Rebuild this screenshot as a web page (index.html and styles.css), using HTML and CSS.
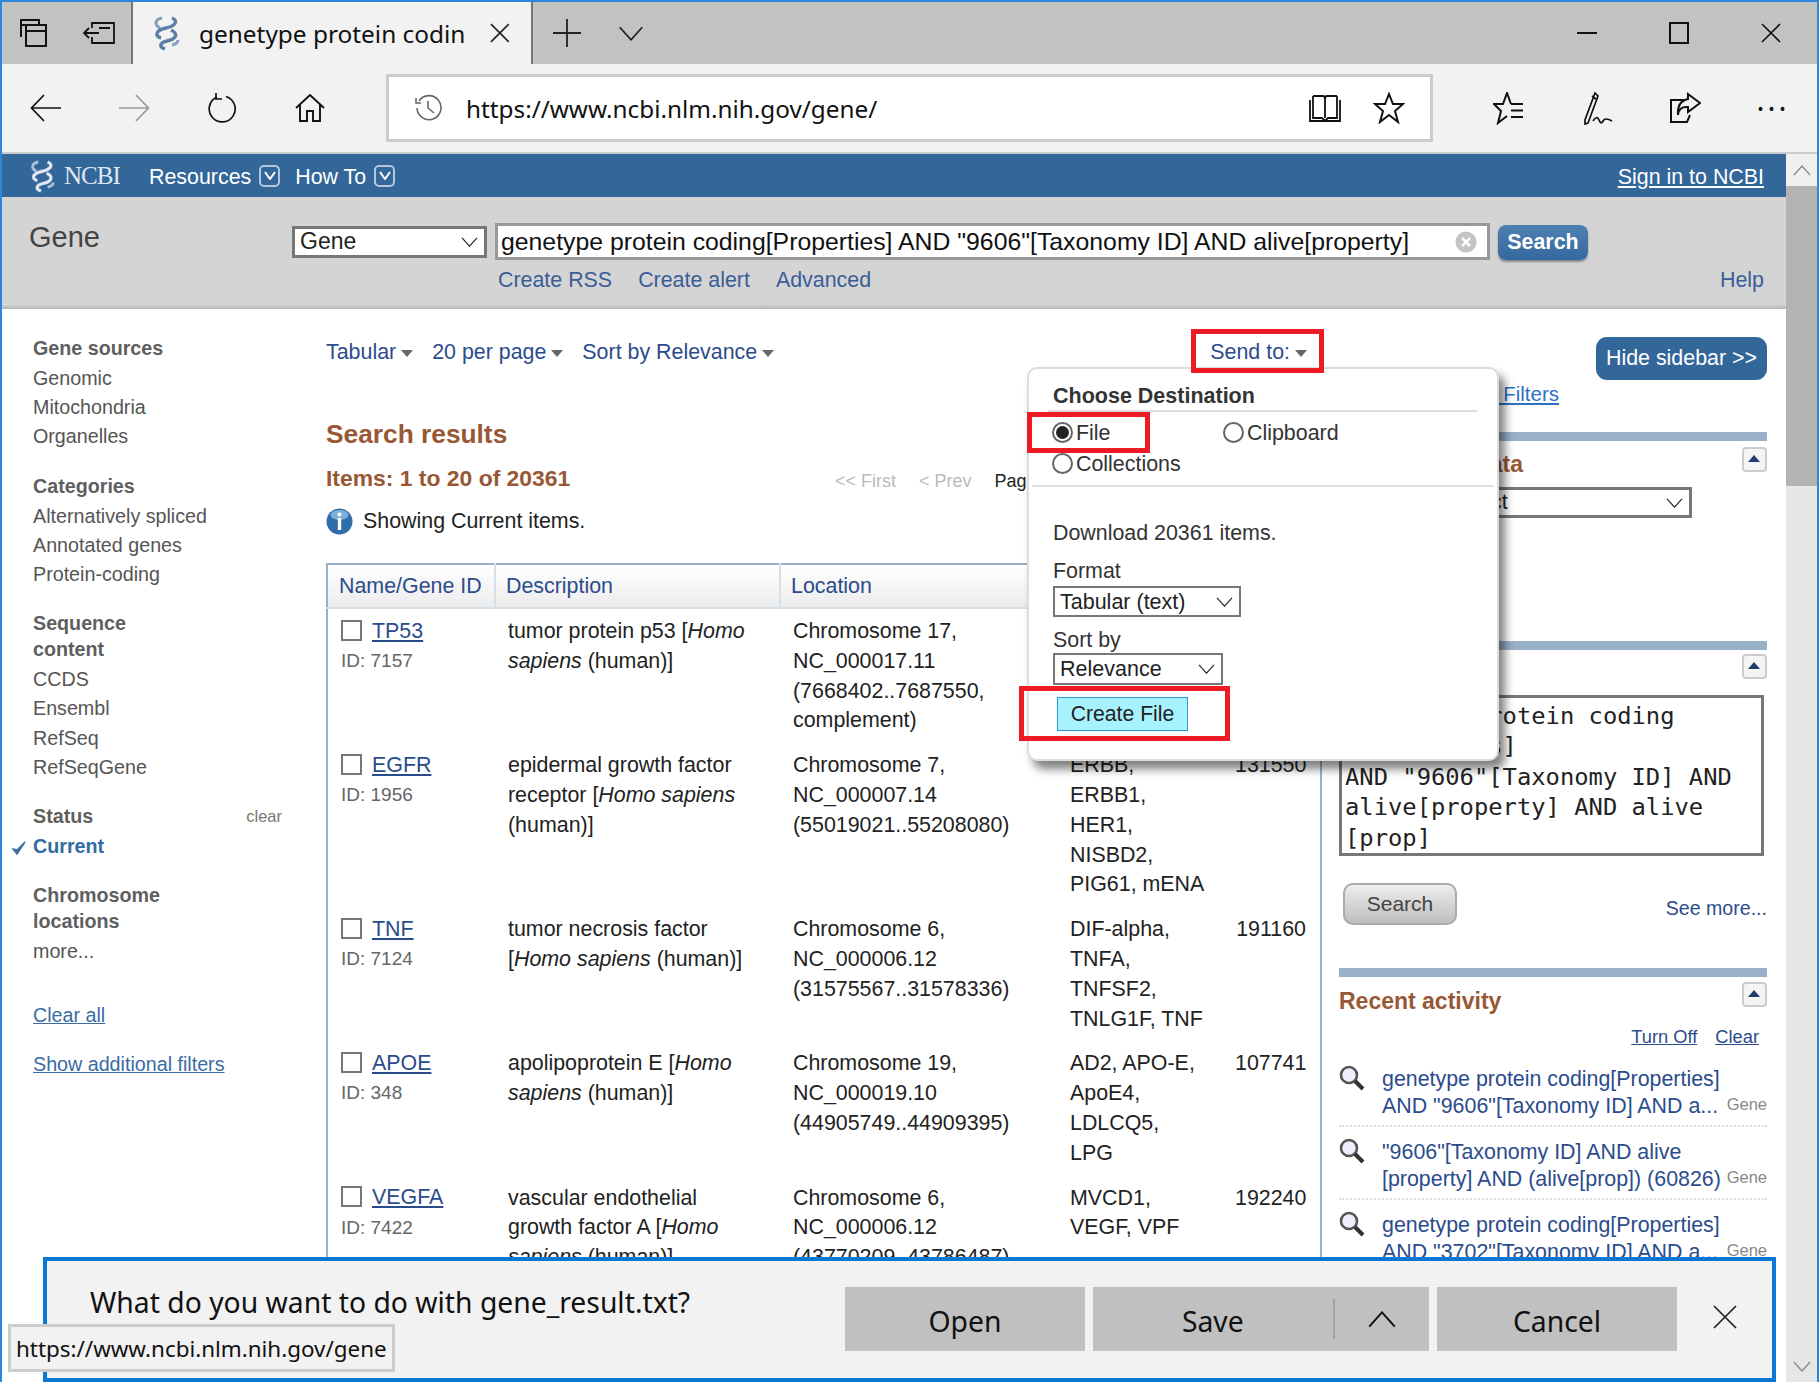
FILE: index.html
```html
<!DOCTYPE html>
<html lang="en">
<head>
    <meta charset="UTF-8">
    <title>genetype protein coding - Gene - NCBI</title>
    <link rel="stylesheet" href="styles.css">
</head>
<body>
<svg class="defs" width="0" height="0">
    <symbol id="helix" viewBox="0 0 30 36">
        <path d="M21 3C28 6 24 11 15 13C5 15 3 21 10 23" fill="none" stroke="currentColor" stroke-width="3.4"/>
        <path d="M9 13C2 9 5 4 11 3" fill="none" stroke="currentColor" stroke-width="3" opacity=".7"/>
        <path d="M20 15C28 19 25 24 16 26C8 28 8 32 14 34" fill="none" stroke="currentColor" stroke-width="3.4"/>
        <path d="M21 30C25 29 27 27 27 25" fill="none" stroke="currentColor" stroke-width="3" opacity=".7"/>
    </symbol>
    <symbol id="chev" viewBox="0 0 20 12">
        <path d="M1 1L10 11L19 1" fill="none" stroke="currentColor" stroke-width="1.4"/>
    </symbol>
    <symbol id="mark-chev" viewBox="0 0 12 9">
        <path d="M1 1L6 8L11 1" fill="none" stroke="currentColor" stroke-width="2"/>
    </symbol>
    <symbol id="glass" viewBox="0 0 26 26">
        <circle cx="10" cy="10" r="8" fill="#eef" stroke="#555" stroke-width="2.6"/>
        <path d="M16 16L24 24" stroke="#333" stroke-width="4"/>
    </symbol>
</svg>

<div class="window">
    <!-- Barra de abas -->
    <div class="tabbar">
        <div class="tab-tool">
            <svg width="28" height="28" viewBox="0 0 28 28" fill="none" stroke="#111" stroke-width="2"><path d="M1 18V1H19V6M1 6H19M6 6H26V27H6ZM6 12H26"/></svg>
        </div>
        <div class="tab-tool">
            <svg width="32" height="22" viewBox="0 0 32 22" fill="none" stroke="#111" stroke-width="1.8"><path d="M9 6V1H31V21H9V15M1 11H16M6 6L1 11L6 16M16 6H27"/></svg>
        </div>
        <div class="tab">
            <svg class="tab-icon" width="32" height="36"><use href="#helix"/></svg>
            <span class="tab-title">genetype protein coding[Properties]</span>
            <svg width="20" height="20" viewBox="0 0 20 20" stroke="#222" stroke-width="1.6"><path d="M1 1L19 19M19 1L1 19"/></svg>
        </div>
        <div class="tab-new">
            <svg width="28" height="28" viewBox="0 0 28 28" stroke="#222" stroke-width="1.8"><path d="M14 0V28M0 14H28"/></svg>
        </div>
        <div class="tab-more">
            <svg width="26" height="15"><use href="#chev"/></svg>
        </div>
        <div class="win-btn win-first">
            <svg width="20" height="3"><rect width="20" height="2" fill="#111"/></svg>
        </div>
        <div class="win-btn">
            <svg width="20" height="22" viewBox="0 0 20 22" fill="none" stroke="#111" stroke-width="2"><rect x="1" y="1" width="18" height="20"/></svg>
        </div>
        <div class="win-btn">
            <svg width="20" height="20" viewBox="0 0 20 20" stroke="#111" stroke-width="1.6"><path d="M1 1L19 19M19 1L1 19"/></svg>
        </div>
    </div>

    <!-- Barra de endereco -->
    <div class="toolbar">
        <div class="nav-btn">
            <svg width="32" height="28" viewBox="0 0 32 28" fill="none" stroke="#111" stroke-width="1.7"><path d="M31 14H2M14 1L1.500 14L14 27"/></svg>
        </div>
        <div class="nav-btn">
            <svg width="32" height="28" viewBox="0 0 32 28" fill="none" stroke="#999" stroke-width="1.7"><path d="M1 14H30M18 1L30.500 14L18 27"/></svg>
        </div>
        <div class="nav-btn">
            <svg width="30" height="30" viewBox="0 0 30 30" fill="none" stroke="#111" stroke-width="1.7"><path d="M10 4A13 13 0 1 0 19 3.500M9 0V6H15"/></svg>
        </div>
        <div class="nav-btn">
            <svg width="30" height="28" viewBox="0 0 30 28" fill="none" stroke="#111" stroke-width="1.9"><path d="M1 14L15 1L29 14M5 11V27H12V17H18V27H25V11"/></svg>
        </div>
        <div class="address">
            <svg class="hist" width="28" height="28" viewBox="0 0 28 28" fill="none" stroke="#666" stroke-width="1.6"><path d="M5 7A12 12 0 1 1 3 14M2 4V9H7M14 7V14L20 19"/></svg>
            <span class="url">https://www.ncbi.nlm.nih.gov/gene/</span>
            <svg width="32" height="30" viewBox="0 0 32 30" fill="none" stroke="#111" stroke-width="1.8"><path d="M4 3H14Q16 3 16 6V25M28 3H18Q16 3 16 6M4 3V25H13L16 28L19 25H28V3M1 7V28H31V7"/></svg>
            <svg class="star" width="32" height="32" viewBox="0 0 32 32" fill="none" stroke="#111" stroke-width="2"><path d="M16 2L20 12H30L22 19L25 30L16 23L7 30L10 19L2 12H12Z"/></svg>
        </div>
        <div class="nav-btn nav-right">
            <svg width="32" height="33" viewBox="0 0 32 33" fill="none" stroke="#111" stroke-width="2"><path d="M18 12L14 1L10 12H1L8 19L5 31L14 24M18 12H30M18 18.500H30M18 25H30"/></svg>
        </div>
        <div class="nav-btn">
            <svg width="32" height="34" viewBox="0 0 32 34" fill="none" stroke="#111" stroke-width="1.7"><path d="M14 2L17 5L7 32L4 33L4 29ZM11 5L15 8M12 30Q16 24 18 29T22 30T31 30"/></svg>
        </div>
        <div class="nav-btn">
            <svg width="32" height="32" viewBox="0 0 32 32" fill="none" stroke="#111" stroke-width="2"><path d="M17 8H2V30H18L21 23M19 2L31 11L19 20V15Q10 14 9 23Q8 9 19 7Z"/></svg>
        </div>
        <div class="nav-btn nav-dots">&middot;&middot;&middot;</div>
    </div>

    <div class="viewport">
        <div class="page">
            <div class="ncbi-bar">
                <svg class="ncbi-logo" width="28" height="34"><use href="#helix"/></svg>
                <span class="ncbi-name">NCBI</span>
                <a class="ncbi-menu">Resources</a>
                <span class="menu-mark"><svg width="12" height="9"><use href="#mark-chev"/></svg></span>
                <a class="ncbi-menu">How To</a>
                <span class="menu-mark"><svg width="12" height="9"><use href="#mark-chev"/></svg></span>
                <a class="sign-in">Sign in to NCBI</a>
            </div>

            <div class="search-bar">
                <div class="db-title">Gene</div>
                <div class="search-main">
                    <div class="search-row">
                        <div class="select db-select">Gene<svg width="17" height="10"><use href="#chev"/></svg></div>
                        <div class="term-box">
                            <span>genetype protein coding[Properties] AND "9606"[Taxonomy ID] AND alive[property]</span>
                            <svg width="22" height="22" viewBox="0 0 22 22"><circle cx="11" cy="11" r="10.500" fill="#c4c4c4"/><path d="M7 7L15 15M15 7L7 15" stroke="#fff" stroke-width="2.500"/></svg>
                        </div>
                        <button class="search-btn">Search</button>
                    </div>
                    <div class="search-links">
                        <a>Create RSS</a>
                        <a>Create alert</a>
                        <a>Advanced</a>
                        <a class="help">Help</a>
                    </div>
                </div>
            </div>

            <div class="content">
                <!-- Filtros -->
                <div class="filters">
                    <div class="filter-group">
                        <h4>Gene sources</h4>
                        <a>Genomic</a>
                        <a>Mitochondria</a>
                        <a>Organelles</a>
                    </div>
                    <div class="filter-group">
                        <h4>Categories</h4>
                        <a>Alternatively spliced</a>
                        <a>Annotated genes</a>
                        <a>Protein-coding</a>
                    </div>
                    <div class="filter-group">
                        <h4>Sequence<br>content</h4>
                        <a>CCDS</a>
                        <a>Ensembl</a>
                        <a>RefSeq</a>
                        <a>RefSeqGene</a>
                    </div>
                    <div class="filter-group">
                        <h4 class="status-head">Status <span class="clear">clear</span></h4>
                        <a class="current">
                            <svg class="check" width="14" height="14" viewBox="0 0 14 14"><path d="M1 8L5 13L13 1L5 9Z" fill="#3f6fa5" stroke="#3f6fa5" stroke-width="1.500"/></svg>
                            Current
                        </a>
                    </div>
                    <div class="filter-group">
                        <h4>Chromosome<br>locations</h4>
                        <a>more...</a>
                    </div>
                    <a class="filter-link first-link">Clear all</a>
                    <a class="filter-link">Show additional filters</a>
                </div>

                <!-- Resultados -->
                <div class="results">
                    <div class="display-row">
                        <a class="display-item">Tabular<i class="caret"></i></a>
                        <a class="display-item">20 per page<i class="caret"></i></a>
                        <a class="display-item">Sort by Relevance<i class="caret"></i></a>
                        <a class="send-to">Send to:<i class="caret"></i></a>
                    </div>
                    <h2 class="results-title">Search results</h2>
                    <div class="items-row">
                        <h3>Items: 1 to 20 of 20361</h3>
                        <div class="pager">
                            <span>&lt;&lt; First</span>
                            <span>&lt; Prev</span>
                            <b>Page</b>
                        </div>
                    </div>
                    <div class="notice">
                        <svg width="27" height="27" viewBox="0 0 27 27"><circle cx="13.500" cy="13.500" r="13" fill="#2d6da8"/><ellipse cx="13.500" cy="7" rx="9" ry="5" fill="#7fb0d8"/><circle cx="13.500" cy="6.500" r="2" fill="#fff"/><rect x="11.800" y="10" width="3.400" height="12" fill="#fff"/></svg>
                        <span>Showing Current items.</span>
                    </div>
                    <table class="gene-table">
                        <colgroup>
                            <col class="col-name"><col class="col-desc"><col class="col-loc"><col class="col-alias"><col class="col-mim">
                        </colgroup>
                        <thead>
                            <tr>
                                <th>Name/Gene ID</th>
                                <th>Description</th>
                                <th>Location</th>
                                <th></th>
                                <th></th>
                            </tr>
                        </thead>
                        <tbody>
                            <tr>
                                <td><span class="gene-line"><i class="box"></i><a>TP53</a></span><span class="gene-id">ID: 7157</span></td>
                                <td>tumor protein p53 [<em>Homo</em><br><em>sapiens</em> (human)]</td>
                                <td>Chromosome 17,<br>NC_000017.11<br>(7668402..7687550,<br>complement)</td>
                                <td></td>
                                <td class="mim"></td>
                            </tr>
                            <tr>
                                <td><span class="gene-line"><i class="box"></i><a>EGFR</a></span><span class="gene-id">ID: 1956</span></td>
                                <td>epidermal growth factor<br>receptor [<em>Homo sapiens</em><br>(human)]</td>
                                <td>Chromosome 7,<br>NC_000007.14<br>(55019021..55208080)</td>
                                <td>ERBB,<br>ERBB1,<br>HER1,<br>NISBD2,<br>PIG61, mENA</td>
                                <td class="mim">131550</td>
                            </tr>
                            <tr>
                                <td><span class="gene-line"><i class="box"></i><a>TNF</a></span><span class="gene-id">ID: 7124</span></td>
                                <td>tumor necrosis factor<br>[<em>Homo sapiens</em> (human)]</td>
                                <td>Chromosome 6,<br>NC_000006.12<br>(31575567..31578336)</td>
                                <td>DIF-alpha,<br>TNFA,<br>TNFSF2,<br>TNLG1F, TNF</td>
                                <td class="mim">191160</td>
                            </tr>
                            <tr>
                                <td><span class="gene-line"><i class="box"></i><a>APOE</a></span><span class="gene-id">ID: 348</span></td>
                                <td>apolipoprotein E [<em>Homo</em><br><em>sapiens</em> (human)]</td>
                                <td>Chromosome 19,<br>NC_000019.10<br>(44905749..44909395)</td>
                                <td>AD2, APO-E,<br>ApoE4,<br>LDLCQ5,<br>LPG</td>
                                <td class="mim">107741</td>
                            </tr>
                            <tr>
                                <td><span class="gene-line"><i class="box"></i><a>VEGFA</a></span><span class="gene-id">ID: 7422</span></td>
                                <td>vascular endothelial<br>growth factor A [<em>Homo</em><br><em>sapiens</em> (human)]</td>
                                <td>Chromosome 6,<br>NC_000006.12<br>(43770209..43786487)</td>
                                <td>MVCD1,<br>VEGF, VPF</td>
                                <td class="mim">192240</td>
                            </tr>
                        </tbody>
                    </table>
                </div>

                <!-- Coluna direita -->
                <div class="side">
                    <a class="hide-sidebar">Hide sidebar &gt;&gt;</a>
                    <div class="manage-filters"><a>Manage Filters</a></div>

                    <div class="side-box box-related">
                        <div class="side-head"><h3>Find related data</h3><span class="toggle"></span></div>
                        <div class="db-row">
                            <span>Database:</span>
                            <div class="select related-select">Select<svg width="17" height="10"><use href="#chev"/></svg></div>
                        </div>
                    </div>

                    <div class="side-box box-details">
                        <div class="side-head"><h3>Search details</h3><span class="toggle"></span></div>
                        <div class="details-box">genetype protein coding<br>[Properties]<br>AND "9606"[Taxonomy ID] AND<br>alive[property] AND alive<br>[prop]</div>
                        <div class="details-actions">
                            <button class="plain-btn">Search</button>
                            <a>See more...</a>
                        </div>
                    </div>

                    <div class="side-box box-recent">
                        <div class="side-head"><h3>Recent activity</h3><span class="toggle"></span></div>
                        <div class="recent-links"><a>Turn Off</a><a>Clear</a></div>
                        <div class="recent-item">
                            <svg width="26" height="26"><use href="#glass"/></svg>
                            <a>genetype protein coding[Properties]<br>AND "9606"[Taxonomy ID] AND a...</a>
                            <span>Gene</span>
                        </div>
                        <div class="recent-item">
                            <svg width="26" height="26"><use href="#glass"/></svg>
                            <a>"9606"[Taxonomy ID] AND alive<br>[property] AND (alive[prop]) (60826)</a>
                            <span>Gene</span>
                        </div>
                        <div class="recent-item">
                            <svg width="26" height="26"><use href="#glass"/></svg>
                            <a>genetype protein coding[Properties]<br>AND "3702"[Taxonomy ID] AND a...</a>
                            <span>Gene</span>
                        </div>
                    </div>
                </div>
            </div>
        </div>

        <div class="scrollbar">
            <div class="scroll-up"><svg width="18" height="11"><use href="#chev"/></svg></div>
            <div class="scroll-thumb"></div>
            <div class="scroll-track"></div>
            <div class="scroll-down"><svg width="18" height="11"><use href="#chev"/></svg></div>
        </div>
    </div>

    <!-- Menu Send to -->
    <div class="send-menu">
        <h4>Choose Destination</h4>
        <div class="radio-grid">
            <label class="radio"><i class="dot on"></i>File</label>
            <label class="radio"><i class="dot"></i>Clipboard</label>
            <label class="radio"><i class="dot"></i>Collections</label>
        </div>
        <div class="menu-line"></div>
        <p class="menu-download">Download 20361 items.</p>
        <p class="menu-label">Format</p>
        <div class="select format-select">Tabular (text)<svg width="17" height="10"><use href="#chev"/></svg></div>
        <p class="menu-label sort-label">Sort by</p>
        <div class="select sort-select">Relevance<svg width="17" height="10"><use href="#chev"/></svg></div>
        <button class="create-file">Create File</button>
    </div>

    <!-- Marcacoes vermelhas -->
    <div class="mark mark-send"></div>
    <div class="mark mark-file"></div>
    <div class="mark mark-create"></div>

    <!-- Barra de download -->
    <div class="download-bar">
        <span class="download-text">What do you want to do with gene_result.txt?</span>
        <div class="download-btns">
            <div class="dl-btn dl-open">Open</div>
            <div class="dl-btn dl-save">
                <span class="save-label">Save</span>
                <span class="save-arrow"><svg width="30" height="17" viewBox="0 0 20 12" class="flip"><use href="#chev"/></svg></span>
            </div>
            <div class="dl-btn dl-open">Cancel</div>
        </div>
        <svg class="dl-close" width="24" height="24" viewBox="0 0 24 24" stroke="#222" stroke-width="1.700"><path d="M1 1L23 23M23 1L1 23"/></svg>
    </div>

    <div class="status-tip">https://www.ncbi.nlm.nih.gov/gene</div>
</div>
</body>
</html>
```

FILE: styles.css
```css
/* Estilo basico */
body {
    margin: 0;
    font-family: "Liberation Sans", Arial, sans-serif;
    font-size: 21.4px;
    color: #222;
    background: #fff;
}

.defs {
    position: absolute;
}

.window {
    position: relative;
    box-sizing: border-box;
    width: 1819px;
    height: 1382px;
    overflow: hidden;
    display: flex;
    flex-direction: column;
    border: 2px solid #2b88d8;
    border-bottom: none;
}

a {
    color: #2b4c8c;
}

p, h2, h3, h4 {
    margin: 0;
}

/* Abas */
.tabbar {
    display: flex;
    flex: none;
    height: 62px;
    background: #c2c2c2;
    font-family: "Noto Sans", sans-serif;
}

.tab-tool {
    width: 64.5px;
    display: flex;
    align-items: center;
    justify-content: center;
}

.tab {
    display: flex;
    align-items: center;
    box-sizing: border-box;
    width: 402px;
    padding: 0 21px 0 17px;
    background: #f2f2f2;
    border-left: 2px solid #777;
    border-right: 2px solid #777;
}

.tab-icon {
    color: #5b7ea6;
    flex: none;
}

.tab-title {
    width: 270px;
    margin-left: 17px;
    margin-right: 25px;
    font-size: 24.4px;
    white-space: nowrap;
    overflow: hidden;
    color: #111;
}

.tab-new, .tab-more {
    display: flex;
    align-items: center;
    justify-content: center;
    width: 68px;
}

.tab-more {
    width: 60px;
    color: #222;
}

.win-btn {
    width: 92px;
    display: flex;
    align-items: center;
    justify-content: center;
}

.win-first {
    margin-left: auto;
}

/* Barra de endereco */
.toolbar {
    display: flex;
    flex: none;
    align-items: center;
    height: 88px;
    background: #f2f2f2;
    border-bottom: 2px solid #ccc;
    font-family: "Noto Sans", sans-serif;
}

.nav-btn {
    width: 88px;
    height: 60px;
    display: flex;
    align-items: center;
    justify-content: center;
    flex: none;
}

.nav-dots {
    font-size: 30px;
    letter-spacing: 3px;
    color: #111;
}

.nav-right {
    margin-left: 32px;
}

.address {
    display: flex;
    flex: none;
    align-items: center;
    box-sizing: border-box;
    width: 1047px;
    height: 68px;
    margin-left: 32px;
    padding: 0 25px 0 25px;
    background: #fff;
    border: 3px solid #ccc;
}

.url {
    flex: 1;
    margin-left: 24px;
    font-size: 24.3px;
    color: #111;
}

.star {
    margin-left: 32px;
}

.viewport {
    flex: 1;
    display: flex;
    min-height: 0;
}

.page {
    flex: 1;
    min-width: 0;
    overflow: hidden;
}

/* Cabecalho NCBI */
.ncbi-bar {
    display: flex;
    align-items: center;
    height: 43px;
    padding: 0 22px 0 26px;
    background: #336699;
    color: #fff;
}

.ncbi-bar a {
    color: #fff;
}

.ncbi-logo {
    color: #dfe7f0;
}

.ncbi-name {
    width: 85px;
    margin-left: 8px;
    font-family: "Liberation Serif", serif;
    font-size: 25px;
    color: #dfe7f0;
    letter-spacing: -1px;
}

.ncbi-menu {
    margin-top: 4px;
    font-size: 21.4px;
}

.menu-mark {
    display: flex;
    align-items: center;
    justify-content: center;
    box-sizing: border-box;
    width: 21px;
    height: 22px;
    margin: 0 15px 0 8px;
    border: 2px solid #b4c8dc;
    border-radius: 5px;
    color: #fff;
}

.sign-in {
    margin-left: auto;
    margin-top: 4px;
    font-size: 21.4px;
    text-decoration: underline;
}

/* Busca */
.search-bar {
    display: flex;
    box-sizing: border-box;
    height: 112px;
    padding: 0 22px 0 27px;
    background: linear-gradient(#d4d4d4 96%, #b4b4b4);
}

.db-title {
    width: 263px;
    padding-top: 24px;
    font-size: 29px;
    color: #444;
}

.search-main {
    flex: 1;
}

.search-row {
    display: flex;
    align-items: center;
    margin-top: 26px;
}

.select {
    display: flex;
    align-items: center;
    justify-content: space-between;
    box-sizing: border-box;
    background: #fff;
    border: 2px solid #777;
    color: #222;
    font-size: 21.5px;
    padding: 0 6px 0 5px;
}

.db-select {
    width: 195px;
    height: 32px;
    border-width: 3px;
    font-size: 23px;
}

.term-box {
    display: flex;
    align-items: center;
    justify-content: space-between;
    box-sizing: border-box;
    width: 995px;
    height: 37px;
    margin-left: 8px;
    padding: 0 10px 0 3px;
    background: #fff;
    border: 3px solid #999;
    font-size: 24.8px;
    color: #111;
    white-space: nowrap;
}

.search-btn {
    width: 90px;
    height: 35px;
    margin: 2px 0 0 8px;
    padding: 0;
    background: linear-gradient(#4e80b4, #35689c);
    border: none;
    border-radius: 8px;
    box-shadow: 0 2px 2px #888;
    color: #fff;
    font-family: inherit;
    font-size: 21.4px;
    font-weight: bold;
}

.search-links {
    display: flex;
    gap: 26px;
    margin: 7px 0 0 206px;
    font-size: 21.4px;
    line-height: 26px;
}

.search-links a {
    color: #3a5d98;
}

.search-links .help {
    margin-left: auto;
}

/* Colunas */
.content {
    display: flex;
}

/* Filtros */
.filters {
    box-sizing: border-box;
    width: 324px;
    flex: none;
    padding: 26px 0 0 31px;
    font-size: 19.7px;
    line-height: 29.2px;
    color: #555;
}

.filter-group {
    margin-bottom: 21px;
}

.filter-group h4 {
    margin-bottom: 3px;
    font-size: 19.7px;
    line-height: 26px;
    color: #5f5f5f;
}

.filter-group a {
    display: block;
    color: #555;
}

.status-head {
    display: flex;
    justify-content: space-between;
    width: 249px;
}

.clear {
    font-size: 16.5px;
    font-weight: normal;
    color: #777;
}

.filter-group .current {
    position: relative;
    color: #336ba3;
    font-weight: bold;
}

.check {
    position: absolute;
    left: -21px;
    top: 9px;
}

.filter-link {
    display: block;
    margin-bottom: 19px;
    color: #3a6ba3;
    text-decoration: underline;
}

.first-link {
    margin-top: 35px;
}

/* Resultados */
.results {
    box-sizing: border-box;
    width: 996px;
    flex: none;
    padding-top: 28px;
}

.display-row {
    display: flex;
    align-items: center;
    height: 30px;
    font-size: 21.4px;
}

.display-row a {
    color: #2b4c8c;
}

.display-item {
    margin-right: 19px;
}

.send-to {
    margin-left: auto;
    margin-right: 15px;
}

.caret {
    display: inline-block;
    margin-left: 5px;
    vertical-align: 2px;
    border-left: 6px solid transparent;
    border-right: 6px solid transparent;
    border-top: 7px solid #666;
}

.results-title {
    margin-top: 49px;
    font-size: 26.3px;
    line-height: 36px;
    color: #985735;
}

.items-row {
    display: flex;
    align-items: center;
    margin-top: 6px;
    height: 40px;
    white-space: nowrap;
}

.items-row h3 {
    width: 509px;
    font-size: 22.9px;
    color: #985735;
}

.pager {
    display: flex;
    gap: 23px;
    margin-top: 7px;
    font-size: 18px;
    color: #bbb;
}

.pager b {
    font-weight: normal;
    color: #222;
}

.notice {
    display: flex;
    align-items: center;
    gap: 10px;
    margin-top: 7px;
    height: 33px;
    font-size: 21.4px;
    color: #222;
}

.gene-table {
    width: 996px;
    margin-top: 25px;
    table-layout: fixed;
    border-collapse: collapse;
    border-top: 2px solid #99b0c9;
    border-left: 2px solid #99b0c9;
    border-right: 2px solid #99b0c9;
    font-size: 21.4px;
    line-height: 29.8px;
}

.col-name { width: 168px; }
.col-desc { width: 285px; }
.col-loc { width: 277px; }
.col-alias { width: 165px; }

.gene-table th {
    height: 40px;
    padding: 2px 0 0 10px;
    text-align: left;
    font-weight: normal;
    color: #2b4c8c;
    background: linear-gradient(#fff, #ececec);
    border-bottom: 2px solid #d5dfe9;
    border-right: 2px solid #d5dfe9;
}

.gene-table th:first-child {
    padding-left: 11px;
}

.gene-table td {
    padding: 8px 0 7px 13px;
    vertical-align: top;
    color: #222;
}

.gene-table .mim {
    padding-right: 14px;
    text-align: right;
}

.gene-line {
    display: flex;
    align-items: center;
    gap: 10px;
    height: 29px;
}

.gene-line a {
    text-decoration: underline;
}

.box {
    box-sizing: border-box;
    width: 21px;
    height: 21px;
    background: #fff;
    border: 2px solid #777;
    margin-top: -3px;
}

.gene-id {
    display: block;
    font-size: 19px;
    color: #666;
}

/* Coluna direita */
.side {
    flex: 1;
    min-width: 0;
    box-sizing: border-box;
    padding: 28px 19px 0 17px;
}

.hide-sidebar {
    display: block;
    width: 171px;
    height: 43px;
    margin-left: auto;
    background: #336699;
    border-radius: 11px;
    color: #fff;
    font-size: 21.4px;
    line-height: 43px;
    text-align: center;
}

.manage-filters {
    margin-top: 2px;
    padding-right: 208px;
    font-size: 20.5px;
    line-height: 24px;
    text-align: right;
    white-space: nowrap;
}

.manage-filters a {
    color: #2a72c8;
    text-decoration: underline;
}

.side-box {
    border-top: 9px solid #99b0c9;
}

.box-related {
    margin-top: 26px;
    height: 200px;
}

.side-head {
    display: flex;
    justify-content: space-between;
    padding-top: 6px;
}

.side-head h3 {
    margin-top: 4px;
    font-size: 23px;
    line-height: 30px;
    color: #985735;
}

.box-related .side-head h3 {
    margin-top: 2px;
}

.toggle {
    position: relative;
    box-sizing: border-box;
    width: 25px;
    height: 25px;
    background: #f4f4f4;
    border: 2px solid #ccc;
    border-radius: 4px;
}

.toggle::after {
    content: "";
    position: absolute;
    left: 4px;
    top: 6px;
    border-left: 6px solid transparent;
    border-right: 6px solid transparent;
    border-bottom: 7px solid #1f3f6f;
}

.db-row {
    display: flex;
    align-items: center;
    justify-content: space-between;
    padding-right: 75px;
    margin-top: 8px;
    color: #222;
}

.related-select {
    width: 252px;
    height: 31px;
    border-width: 3px;
}

.box-details .side-head {
    padding-top: 4px;
}

.details-box {
    box-sizing: border-box;
    height: 161px;
    margin: 7px 3px 0 0;
    padding: 3px 0 0 3px;
    border: 3px solid #777;
    font-family: "DejaVu Sans Mono", monospace;
    font-size: 23.8px;
    line-height: 30.4px;
    color: #222;
    white-space: nowrap;
}

.details-actions {
    display: flex;
    align-items: flex-start;
    justify-content: space-between;
    height: 85px;
    margin-top: 27px;
    padding-left: 4px;
    font-size: 19.6px;
}

.details-actions a {
    margin-top: 14px;
    color: #2b4c8c;
}

.plain-btn {
    width: 114px;
    height: 42px;
    padding: 0;
    background: linear-gradient(#eee, #bdbdbd);
    border: 2px solid #aaa;
    border-radius: 10px;
    color: #444;
    font-family: inherit;
    font-size: 21px;
}

.box-recent .side-head {
    padding-top: 5px;
}

.recent-links {
    display: flex;
    justify-content: flex-end;
    gap: 18px;
    margin: 9px 0 5px;
    padding-right: 8px;
    font-size: 18.3px;
    line-height: 24px;
}

.recent-links a {
    text-decoration: underline;
}

.recent-item {
    display: flex;
    align-items: flex-start;
    box-sizing: border-box;
    height: 73px;
    padding-top: 10px;
    border-bottom: 2px dotted #ddd;
    font-size: 21.4px;
    line-height: 27px;
    white-space: nowrap;
}

.recent-item svg {
    margin-top: 1px;
}

.recent-item a {
    flex: 1;
    margin: 2px 0 0 17px;
}

.recent-item span {
    margin-top: 30px;
    font-size: 16.5px;
    line-height: 20px;
    color: #888;
}

/* Barra de rolagem */
.scrollbar {
    flex: none;
    display: flex;
    flex-direction: column;
    width: 31px;
    background: #e6e6e6;
}

.scroll-up, .scroll-down {
    display: flex;
    align-items: center;
    justify-content: center;
    height: 32px;
    color: #888;
}

.scroll-up {
    background: #f0f0f0;
}

.scroll-up svg {
    transform: scaleY(-1);
}

.scroll-thumb {
    height: 300px;
    background: #b3b3b3;
}

.scroll-track {
    flex: 1;
}

/* Menu Send to */
.send-menu {
    position: absolute;
    left: 1025px;
    top: 365px;
    box-sizing: border-box;
    width: 472px;
    height: 394px;
    background: #fff;
    border: 2px solid #ddd;
    border-radius: 10px;
    box-shadow: 6px 8px 10px rgba(0, 0, 0, 0.5);
    font-size: 21.4px;
    line-height: 26px;
    color: #333;
}

.send-menu h4 {
    margin: 14px 20px 0 19px;
    padding: 0 0 1px 5px;
    border-bottom: 2px solid #ddd;
    font-size: 21.5px;
    color: #333;
}

.radio-grid {
    display: grid;
    grid-template-columns: 171px 1fr;
    grid-auto-rows: 31px;
    margin: 5px 0 0 23px;
}

.radio {
    display: flex;
    align-items: center;
    gap: 3px;
}

.radio:last-child {
    grid-column: 1 / 3;
}

.dot {
    display: flex;
    align-items: center;
    justify-content: center;
    box-sizing: border-box;
    width: 21px;
    height: 21px;
    border: 2px solid #666;
    border-radius: 50%;
}

.dot.on::after {
    content: "";
    width: 13px;
    height: 13px;
    border-radius: 50%;
    background: #222;
}

.menu-line {
    height: 2px;
    margin: 6px 3px 0;
    background: #ddd;
}

.menu-download {
    margin: 33px 0 0 24px;
}

.menu-label {
    margin: 12px 0 2px 24px;
}

.sort-label {
    margin: 10px 0 0 24px;
}

.format-select {
    width: 188px;
    height: 31px;
    margin-left: 24px;
}

.sort-select {
    width: 170px;
    height: 32px;
    margin-left: 24px;
}

.create-file {
    display: block;
    width: 131px;
    height: 34px;
    margin: 12px 0 0 28px;
    padding: 0;
    background: #a6f3ff;
    border: 1px solid #2b9ad6;
    color: #222;
    font-family: inherit;
    font-size: 21.2px;
}

/* Marcacoes */
.mark {
    position: absolute;
    box-sizing: border-box;
    border: 5px solid #ed1c24;
}

.mark-send {
    left: 1189px;
    top: 327px;
    width: 133px;
    height: 44px;
}

.mark-file {
    left: 1025px;
    top: 410px;
    width: 123px;
    height: 41px;
}

.mark-create {
    left: 1017px;
    top: 684px;
    width: 211px;
    height: 55px;
}

/* Barra de download */
.download-bar {
    position: absolute;
    left: 41px;
    top: 1255px;
    box-sizing: border-box;
    display: flex;
    width: 1733px;
    height: 125px;
    padding: 0 0 0 43px;
    background: #f2f2f2;
    border: 4px solid #0a78d4;
    font-family: "Noto Sans", sans-serif;
    color: #111;
}

.download-text {
    flex: 1;
    margin-top: 21px;
    font-size: 28.3px;
    line-height: 40px;
}

.download-btns {
    display: flex;
    gap: 8px;
    margin-top: 26px;
}

.dl-btn {
    display: flex;
    align-items: center;
    justify-content: center;
    box-sizing: border-box;
    height: 64px;
    padding-top: 3px;
    background: #c0c0c0;
    font-size: 28.3px;
}

.dl-open {
    width: 240px;
}

.dl-save {
    width: 336px;
    padding-top: 0;
}

.save-label {
    width: 241px;
    padding-top: 3px;
    text-align: center;
}

.save-arrow {
    display: flex;
    align-items: center;
    justify-content: center;
    width: 95px;
    height: 40px;
    border-left: 2px solid #a4a4a4;
}

.flip {
    transform: scaleY(-1);
}

.dl-close {
    margin: 44px 35px 0 36px;
}

.status-tip {
    position: absolute;
    left: 6px;
    top: 1322px;
    box-sizing: border-box;
    width: 387px;
    height: 48px;
    padding-left: 5px;
    background: #f2f2f2;
    border: 3px solid #ccc;
    font-family: "Noto Sans", sans-serif;
    font-size: 22.4px;
    line-height: 44px;
    color: #111;
    white-space: nowrap;
}
```
